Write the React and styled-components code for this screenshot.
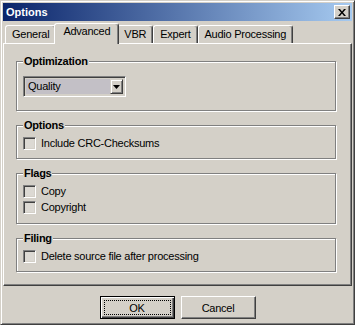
import styled, { createGlobalStyle } from 'styled-components'

const Global = createGlobalStyle`
  html, body { margin: 0; padding: 0; background: #d4d0c8; }
  body {
    font-family: 'Liberation Sans', Arial, sans-serif;
    font-size: 11px;
    letter-spacing: -0.25px;
    color: #000;
  }
`

const Window = styled.div`
  width: 355px;
  height: 325px;
  box-sizing: border-box;
  background: #d4d0c8;
  border: 1px solid;
  border-color: #d4d0c8 #404040 #404040 #d4d0c8;
  box-shadow: inset 1px 1px 0 #fff, inset -1px -1px 0 #808080;
  padding: 2px;
  display: flex;
  flex-direction: column;
`

const TitleBar = styled.div`
  height: 18px;
  display: flex;
  align-items: center;
  padding: 0 2px 0 3px;
  background: linear-gradient(to right, #0a246a, #a6caf0);
  color: #fff;
  font-weight: bold;
  font-size: 11px;
  letter-spacing: 0;
`

const CloseButton = styled.div`
  margin-left: auto;
  width: 16px;
  height: 14px;
  box-sizing: border-box;
  background: #d4d0c8;
  border: 1px solid;
  border-color: #fff #404040 #404040 #fff;
  box-shadow: inset -1px -1px 0 #808080;
  display: flex;
  align-items: center;
  justify-content: center;
`

const TabStrip = styled.div`
  margin-top: 2px;
  padding-left: 2px;
  height: 20px;
  display: flex;
  align-items: flex-end;
  position: relative;
  z-index: 1;
`

const Tab = styled.div`
  box-sizing: border-box;
  height: ${p => (p.$active ? '21px' : '18px')};
  margin: ${p => (p.$active ? '0 -2px -1px' : '0')};
  padding: ${p => (p.$active ? '1px 8px 0' : '2px 6px 0')};
  background: #d4d0c8;
  border: 1px solid;
  border-bottom: none;
  border-color: #fff #404040 transparent #fff;
  border-radius: 3px 3px 0 0;
  box-shadow: inset -1px 0 0 #808080;
  line-height: 13px;
  white-space: nowrap;
  position: relative;
  z-index: ${p => (p.$active ? 2 : 0)};
`

const Panel = styled.div`
  height: 243px;
  box-sizing: border-box;
  border: 1px solid;
  border-color: #fff #404040 #404040 #fff;
  box-shadow: inset -1px -1px 0 #808080;
  padding: 11px 15px 0 12px;
  display: flex;
  flex-direction: column;
  gap: 8px;
`

const Group = styled.fieldset`
  margin: 0;
  padding: 0 6px ${p => p.$pb || 7}px;
  border: 1px solid #808080;
  box-shadow: inset 1px 1px 0 #fff, 1px 1px 0 #fff;
  min-width: 0;
`

const Legend = styled.legend`
  font-weight: bold;
  line-height: 13px;
  padding: 0 1px;
  background: #d4d0c8;
`

const Combo = styled.div`
  margin-top: 8px;
  width: 103px;
  height: 21px;
  box-sizing: border-box;
  border: 1px solid;
  border-color: #808080 #fff #fff #808080;
  box-shadow: inset 1px 1px 0 #404040, inset -1px -1px 0 #d4d0c8;
  padding: 2px;
  display: flex;
`

const ComboValue = styled.div`
  flex: 1;
  background: #c3c0c6;
  padding-left: 2px;
  line-height: 15px;
`

const DropButton = styled.div`
  width: 13px;
  box-sizing: border-box;
  background: #d4d0c8;
  border: 1px solid;
  border-color: #d4d0c8 #404040 #404040 #d4d0c8;
  box-shadow: inset 1px 1px 0 #fff, inset -1px -1px 0 #808080;
  display: flex;
  align-items: center;
  justify-content: center;
`

const Rows = styled.div`
  margin-top: 3px;
`

const CheckRow = styled.label`
  height: 16px;
  display: flex;
  align-items: center;
  gap: 5px;
`

const Box = styled.span`
  width: 13px;
  height: 13px;
  box-sizing: border-box;
  border: 1px solid;
  border-color: #808080 #fff #fff #808080;
  box-shadow: inset 1px 1px 0 #404040, inset -1px -1px 0 #d4d0c8;
  background: #dcd9d3;
`

const ButtonRow = styled.div`
  margin-top: 10px;
  display: flex;
  justify-content: center;
  gap: 6px;
`

const Button = styled.div`
  width: 75px;
  height: 23px;
  box-sizing: border-box;
  border: 1px solid;
  border-color: ${p => (p.$default ? '#000' : '#fff #404040 #404040 #fff')};
  box-shadow: ${p => (p.$default
    ? 'inset 1px 1px 0 #fff, inset -1px -1px 0 #404040, inset -2px -2px 0 #808080'
    : 'inset -1px -1px 0 #808080')};
  display: flex;
  align-items: center;
  justify-content: center;
  padding: 3px;
`

const Focus = styled.div`
  flex: 1;
  align-self: stretch;
  display: flex;
  align-items: center;
  justify-content: center;
  outline: ${p => (p.$on ? '1px dotted #000' : 'none')};
  outline-offset: -1px;
`

function Check({ children }) {
  return (
    <CheckRow>
      <Box />
      <span>{children}</span>
    </CheckRow>
  )
}

export default function App() {
  return (
    <>
      <Global />
      <Window>
        <TitleBar>
          Options
          <CloseButton>
            <svg width="8" height="7" viewBox="0 0 8 7">
              <path d="M0 0h2l2 2.5L6 0h2L5 3.5 8 7H6L4 4.5 2 7H0l3-3.5z" fill="#000" />
            </svg>
          </CloseButton>
        </TitleBar>
        <TabStrip>
          <Tab>General</Tab>
          <Tab $active>Advanced</Tab>
          <Tab>VBR</Tab>
          <Tab>Expert</Tab>
          <Tab>Audio Processing</Tab>
        </TabStrip>
        <Panel>
          <Group $pb={13}>
            <Legend>Optimization</Legend>
            <Combo>
              <ComboValue>Quality</ComboValue>
              <DropButton>
                <svg width="7" height="4" viewBox="0 0 7 4">
                  <path d="M0 0h7L3.5 4z" fill="#000" />
                </svg>
              </DropButton>
            </Combo>
          </Group>
          <Group>
            <Legend>Options</Legend>
            <Rows>
              <Check>Include CRC-Checksums</Check>
            </Rows>
          </Group>
          <Group $pb={8}>
            <Legend>Flags</Legend>
            <Rows>
              <Check>Copy</Check>
              <Check>Copyright</Check>
            </Rows>
          </Group>
          <Group>
            <Legend>Filing</Legend>
            <Rows>
              <Check>Delete source file after processing</Check>
            </Rows>
          </Group>
        </Panel>
        <ButtonRow>
          <Button $default>
            <Focus $on>OK</Focus>
          </Button>
          <Button>
            <Focus>Cancel</Focus>
          </Button>
        </ButtonRow>
      </Window>
    </>
  )
}
